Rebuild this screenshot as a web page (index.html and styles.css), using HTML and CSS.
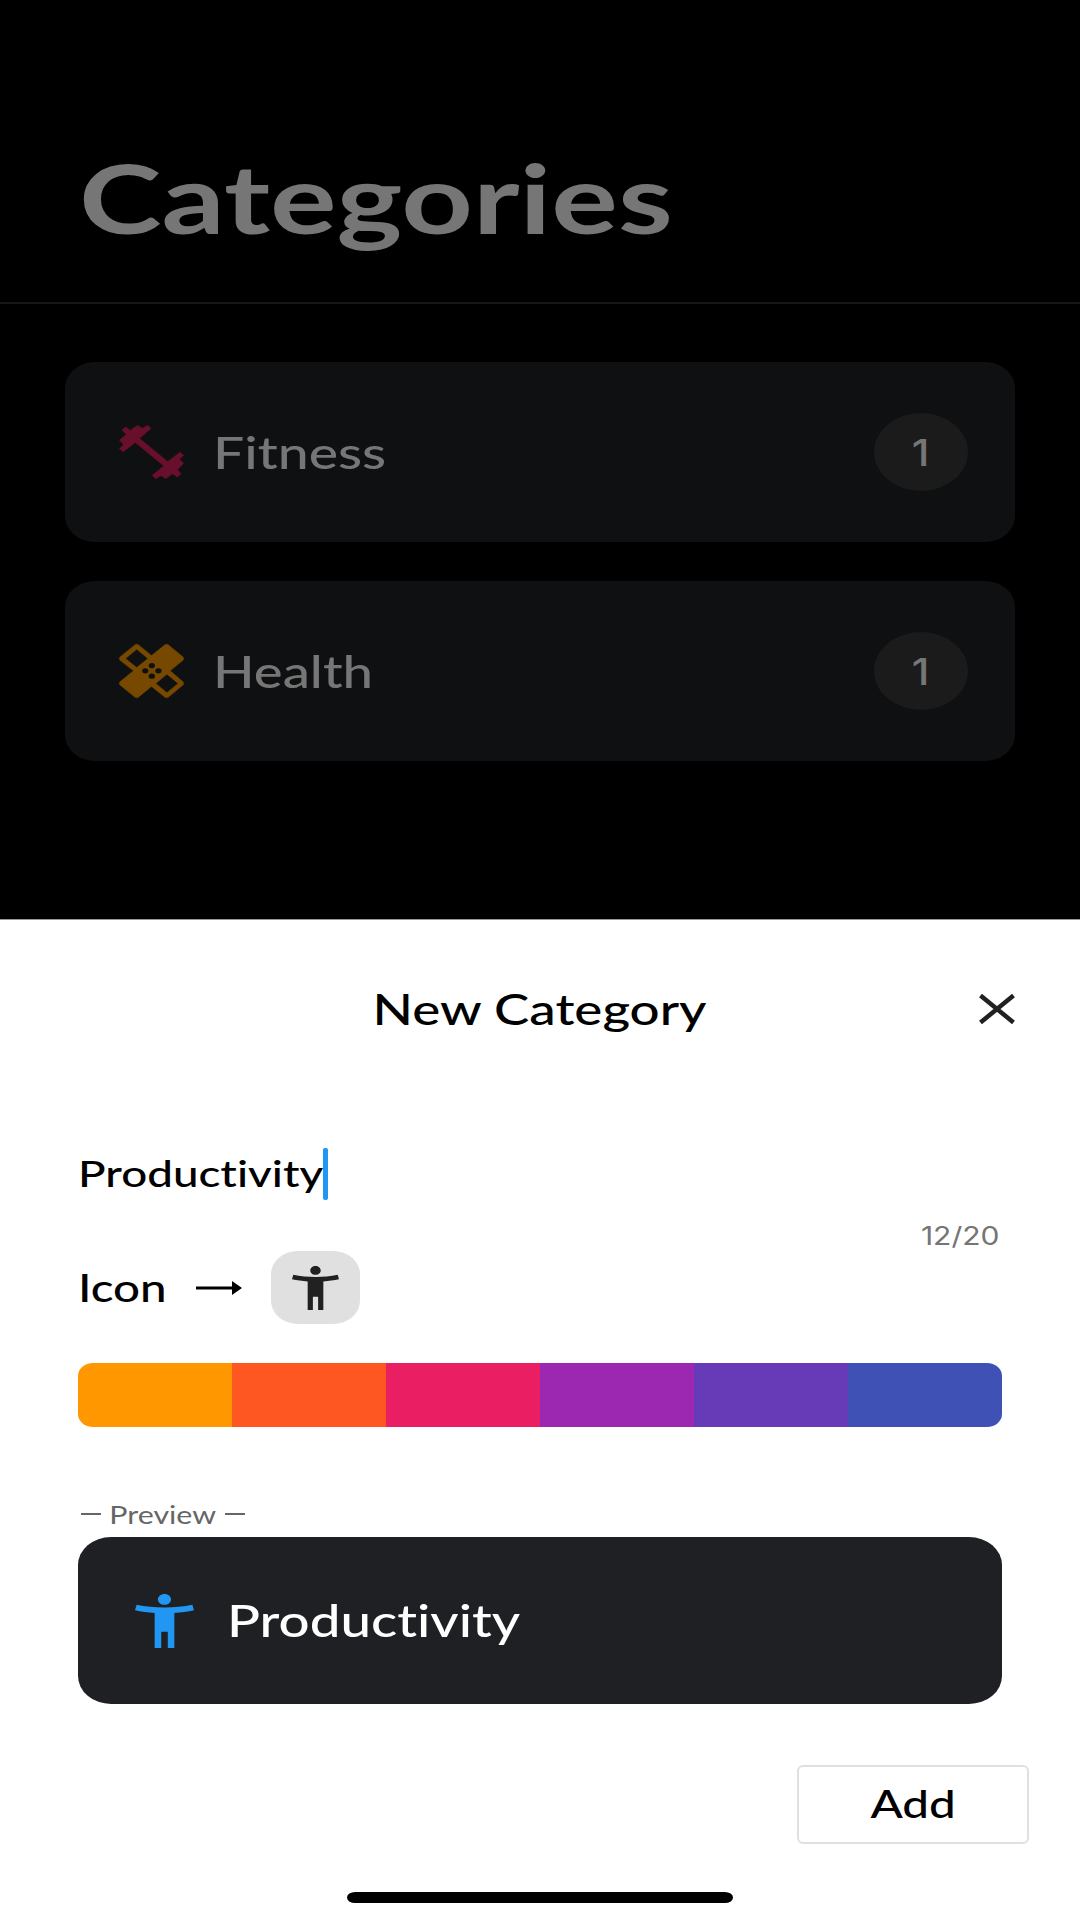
FILE: index.html
```html
<!doctype html>
<html lang="en">
  <head>
    <meta charset="UTF-8" />
    <meta name="viewport" content="width=device-width, initial-scale=1.0" />
    <title>Categories</title>
    <link rel="stylesheet" href="styles.css">
  </head>
  <body>
    <svg class="sprite" aria-hidden="true">
      <symbol id="person" viewBox="3 2 18 20" preserveAspectRatio="none">
        <path d="M20.5 6c-2.61.7-5.67 1-8.5 1s-5.89-.3-8.5-1L3 8c1.86.5 4 .83 6 1v13h2v-6h2v6h2V9c2-.17 4.14-.5 6-1l-.5-2zM12 6c1.1 0 2-.9 2-2s-.9-2-2-2-2 .9-2 2 .9 2 2 2z" />
      </symbol>
    </svg>

    <div class="page">
      <div class="header">
        <h1><span class="wide">Categories</span></h1>
      </div>

      <div class="category-list">
        <!-- Fitness -->
        <div class="category fitness">
          <svg class="category-icon" viewBox="206 226 196 161" preserveAspectRatio="none">
            <path d="M215 241L226 232L240 242L262 227L277 236L292 227L303 236L268 266L353 335L390 307L401 317L388 328L401 340L383 359L393 372L381 381L367 371L347 386L333 377L317 386L306 376L341 348L255 278L219 306L207 297L220 284L207 271L228 254Z" />
          </svg>
          <div class="category-name"><span class="wide">Fitness</span></div>
          <div class="category-count"><span class="wide">1</span></div>
        </div>

        <!-- Health -->
        <div class="category health">
          <svg class="category-icon" viewBox="204 221 198 163" preserveAspectRatio="none">
            <path fill-rule="evenodd" d="M253 223Q258 220 263 223L303 256L344 223Q349 220 354 223L399 260Q404 265 399 270L360 302L399 335Q404 340 399 345L354 382Q349 385 344 382L303 349L263 382Q258 385 253 382L207 345Q202 340 207 335L248 302L207 270Q202 265 207 260ZM258 237L224 265L258 292L292 265ZM350 312L316 340L350 368L384 340Z" />
            <g class="holes">
              <ellipse cx="304" cy="286" rx="9.5" ry="8" />
              <ellipse cx="284" cy="302" rx="9.5" ry="8" />
              <ellipse cx="324" cy="302" rx="9.5" ry="8" />
              <ellipse cx="304" cy="318" rx="9.5" ry="8" />
            </g>
          </svg>
          <div class="category-name"><span class="wide">Health</span></div>
          <div class="category-count"><span class="wide">1</span></div>
        </div>
      </div>

      <!-- New category sheet -->
      <div class="sheet">
        <div class="sheet-header">
          <h2><span class="wide">New Category</span></h2>
          <svg class="close" viewBox="0 0 36 30">
            <path d="M1.5 1.5L34.5 28.5M34.5 1.5L1.5 28.5" />
          </svg>
        </div>

        <div class="name-field"><span class="wide">Productivity</span><i class="caret"></i></div>
        <div class="counter"><span class="wide">12/20</span></div>

        <div class="icon-row">
          <div class="icon-label"><span class="wide">Icon</span></div>
          <svg class="arrow" viewBox="0 0 46 14">
            <path d="M0 5.5H36V0L46 7L36 14V8.5H0Z" />
          </svg>
          <div class="icon-chip">
            <svg><use href="#person" /></svg>
          </div>
        </div>

        <div class="palette">
          <div class="orange"></div>
          <div class="deep-orange"></div>
          <div class="pink"></div>
          <div class="purple"></div>
          <div class="deep-purple"></div>
          <div class="indigo"></div>
        </div>

        <div class="preview-label"><i></i><span class="wide">Preview</span><i></i></div>
        <div class="preview">
          <svg><use href="#person" /></svg>
          <div class="category-name"><span class="wide">Productivity</span></div>
        </div>

        <button class="add"><span class="wide">Add</span></button>
        <div class="home-bar"></div>
      </div>
    </div>
  </body>
</html>
```
FILE: styles.css
```css
* {
  margin: 0;
  padding: 0;
  box-sizing: border-box;
}

body {
  font-family: Lato, 'Open Sans', sans-serif;
  font-variant-ligatures: none;
  background: #000;
}

.sprite {
  display: none;
}

.page {
  width: 1080px;
  height: 1920px;
  display: flex;
  flex-direction: column;
  overflow: hidden;
}

/* the UI type is extended, so every label is stretched sideways */
.wide {
  display: inline-block;
  white-space: nowrap;
  transform: scaleX(1.25);
  transform-origin: left center;
}

.header {
  height: 304px;
  padding: 138px 0 0 79px;
  border-bottom: 2px solid #171717;
}

.header h1 {
  font-size: 96px;
  font-weight: 700;
  line-height: 118px;
  color: #767676;
}

.header .wide {
  transform: scaleX(1.3);
}

.category-list {
  height: 615px;
  padding: 58px 65px 0;
  display: flex;
  flex-direction: column;
  gap: 39px;
}

.category {
  height: 180px;
  padding: 0 47px 0 54px;
  display: flex;
  align-items: center;
  background: #0f1011;
  border-radius: 30px / 26px;
}

.category-icon {
  width: 65px;
  height: 54px;
  margin-right: 29px;
  overflow: visible;
}

.fitness .category-icon {
  fill: #680f2c;
  stroke: #680f2c;
  stroke-width: 1.5;
}

.health .category-icon {
  fill: #764800;
  stroke: #764800;
  stroke-width: 1.5;
}

.holes {
  fill: #0f1011;
  stroke: none;
}

.category-name {
  flex: 1;
  font-size: 45px;
  font-weight: 500;
  color: #767676;
}

.fitness .category-name .wide {
  transform: scaleX(1.23);
}

.health .category-name .wide {
  transform: scaleX(1.21);
}

.category-count {
  width: 94px;
  height: 78px;
  display: flex;
  align-items: center;
  justify-content: center;
  background: #1b1b1c;
  border-radius: 50%;
  font-family: Inter, sans-serif;
  font-size: 37px;
  font-weight: 500;
  color: #767676;
}

.category-count .wide {
  transform: scaleX(1.15);
  transform-origin: center;
}

.sheet {
  height: 1001px;
  padding: 0 78px;
  background: #fff;
  border-top: 1px solid #999;
}

.sheet-header {
  height: 178px;
  margin-right: -13px;
  display: flex;
  align-items: center;
}

.sheet-header h2 {
  flex: 1;
  padding-left: 22px;
  text-align: center;
  font-size: 42px;
  font-weight: 500;
}

.sheet-header .wide {
  transform: scaleX(1.26);
  transform-origin: center;
}

.close {
  width: 36px;
  height: 30px;
  fill: none;
  stroke: #212121;
  stroke-width: 4.5;
}

.name-field {
  width: 250px;
  height: 52px;
  margin-top: 50px;
  display: flex;
  align-items: center;
  justify-content: space-between;
  font-size: 37.5px;
  font-weight: 500;
}

.name-field .wide {
  padding-bottom: 4px;
  transform: scaleX(1.22);
}

.caret {
  width: 5px;
  height: 52px;
  background: #2196f3;
  border-radius: 2px;
}

.counter {
  height: 51px;
  padding: 21px 3px 0 0;
  text-align: right;
  font-family: Inter, sans-serif;
  font-size: 25px;
  line-height: 30px;
  color: #757575;
}

.counter .wide {
  transform: scaleX(1.2);
  transform-origin: right center;
}

.icon-row {
  height: 73px;
  display: flex;
  align-items: center;
}

.icon-label {
  width: 118px;
  padding-bottom: 2px;
  font-size: 38px;
  font-weight: 500;
}

.arrow {
  width: 46px;
  height: 14px;
  margin-right: 29px;
}

.icon-chip {
  width: 89px;
  height: 73px;
  display: flex;
  align-items: center;
  justify-content: center;
  background: #e0e0e0;
  border-radius: 27px / 23px;
}

.icon-chip svg {
  width: 47px;
  height: 44px;
  fill: #212121;
}

.palette {
  height: 64px;
  margin-top: 39px;
  display: flex;
  border-radius: 15px / 13px;
  overflow: hidden;
}

.palette div {
  flex: 1;
}

.orange {
  background: #ff9800;
}

.deep-orange {
  background: #ff5722;
}

.pink {
  background: #e91e63;
}

.purple {
  background: #9c27b0;
}

.deep-purple {
  background: #673ab7;
}

.indigo {
  background: #3f51b5;
}

.preview-label {
  width: 170px;
  height: 30px;
  margin-top: 72px;
  padding: 0 3px;
  display: flex;
  align-items: center;
  font-size: 25.5px;
  color: #666;
}

.preview-label i {
  width: 20px;
  height: 2px;
  background: #666;
}

.preview-label .wide {
  width: 124px;
  padding-left: 7px;
  transform: scaleX(1.19);
}

.preview {
  height: 167px;
  margin-top: 8px;
  padding-left: 57px;
  display: flex;
  align-items: center;
  background: #1f2024;
  border-radius: 33px / 28px;
}

.preview svg {
  width: 59px;
  height: 54px;
  margin-right: 33px;
  fill: #2196f3;
}

.preview .category-name {
  padding-bottom: 1px;
  color: #fff;
}

.preview .wide {
  transform: scaleX(1.215);
}

.add {
  display: block;
  width: 232px;
  height: 79px;
  margin: 61px -27px 0 auto;
  padding-bottom: 4px;
  background: #fff;
  border: 2px solid #e0e0e0;
  border-radius: 6px;
  font-family: inherit;
  font-size: 38px;
  font-weight: 500;
  color: #000;
}

.add .wide {
  transform-origin: center;
}

.home-bar {
  width: 386px;
  height: 11px;
  margin: 48px auto 0;
  background: #000;
  border-radius: 8px / 5.5px;
}
```
